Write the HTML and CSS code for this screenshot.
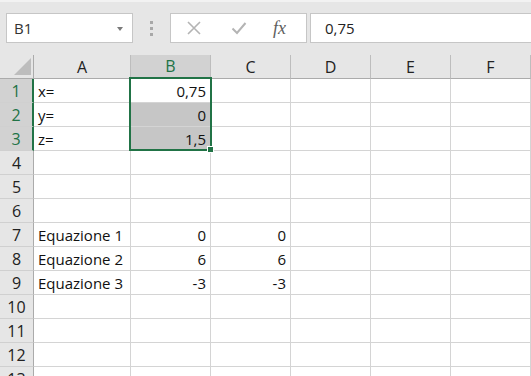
FILE: index.html
```html
<!DOCTYPE html>
<html>
<head>
<meta charset="utf-8">
<link rel="stylesheet" href="styles.css">
</head>
<body>
<div class="app">
  <div class="fbar">
    <div class="namebox">
      <span class="nb-text">B1</span>
      <span class="nb-arrow"></span>
    </div>
    <div class="grip"><span></span><span></span><span></span></div>
    <div class="fbtns">
      <svg class="ico" width="16" height="16" viewBox="0 0 16 16"><path d="M2 2 L14 14 M14 2 L2 14" stroke="#b4b4b4" stroke-width="1.6" fill="none"/></svg>
      <svg class="ico" width="16" height="16" viewBox="0 0 16 16"><path d="M1.5 8.5 L6 13 L14.5 3" stroke="#b4b4b4" stroke-width="2" fill="none"/></svg>
      <span class="fx">fx</span>
    </div>
    <div class="finput">0,75</div>
  </div>
  <div class="sheet">
    <div class="grid">
      <div class="h corner"><span class="tri"></span></div>
      <div class="h col">A</div>
      <div class="h col sel">B</div>
      <div class="h col">C</div>
      <div class="h col">D</div>
      <div class="h col">E</div>
      <div class="h col">F</div>

      <div class="rh sel">1</div>
      <div class="c">x=</div><div class="c n">0,75</div><div class="c"></div><div class="c"></div><div class="c"></div><div class="c"></div>

      <div class="rh sel">2</div>
      <div class="c">y=</div><div class="c n shade">0</div><div class="c"></div><div class="c"></div><div class="c"></div><div class="c"></div>

      <div class="rh sel">3</div>
      <div class="c">z=</div><div class="c n shade">1,5</div><div class="c"></div><div class="c"></div><div class="c"></div><div class="c"></div>

      <div class="rh">4</div>
      <div class="c"></div><div class="c"></div><div class="c"></div><div class="c"></div><div class="c"></div><div class="c"></div>

      <div class="rh">5</div>
      <div class="c"></div><div class="c"></div><div class="c"></div><div class="c"></div><div class="c"></div><div class="c"></div>

      <div class="rh">6</div>
      <div class="c"></div><div class="c"></div><div class="c"></div><div class="c"></div><div class="c"></div><div class="c"></div>

      <div class="rh">7</div>
      <div class="c">Equazione 1</div><div class="c n">0</div><div class="c n">0</div><div class="c"></div><div class="c"></div><div class="c"></div>

      <div class="rh">8</div>
      <div class="c">Equazione 2</div><div class="c n">6</div><div class="c n">6</div><div class="c"></div><div class="c"></div><div class="c"></div>

      <div class="rh">9</div>
      <div class="c">Equazione 3</div><div class="c n">-3</div><div class="c n">-3</div><div class="c"></div><div class="c"></div><div class="c"></div>

      <div class="rh">10</div>
      <div class="c"></div><div class="c"></div><div class="c"></div><div class="c"></div><div class="c"></div><div class="c"></div>

      <div class="rh">11</div>
      <div class="c"></div><div class="c"></div><div class="c"></div><div class="c"></div><div class="c"></div><div class="c"></div>

      <div class="rh">12</div>
      <div class="c"></div><div class="c"></div><div class="c"></div><div class="c"></div><div class="c"></div><div class="c"></div>

      <div class="rh">13</div>
      <div class="c"></div><div class="c"></div><div class="c"></div><div class="c"></div><div class="c"></div><div class="c"></div>
    </div>
    <div class="selection"><span class="handle"></span></div>
  </div>
</div>
</body>
</html>
```
FILE: styles.css
```css
html, body {
  margin: 0;
  padding: 0;
  background: #ffffff;
}
.app {
  width: 531px;
  height: 376px;
  overflow: hidden;
  font-family: "Open Sans", "Noto Sans", sans-serif;
  font-size: 15px;
  color: #111;
}
.fbar {
  height: 55px;
  box-sizing: border-box;
  background: #e6e6e6;
  border-top: 2px solid #f2f2f2;
  display: flex;
  align-items: flex-start;
  padding: 11px 0 0 6px;
}
.namebox {
  width: 127px;
  height: 30px;
  box-sizing: border-box;
  border: 1px solid #c6c6c6;
  background: #fff;
  display: flex;
  align-items: center;
  justify-content: space-between;
  padding: 0 9px 0 7px;
  color: #333;
}
.nb-arrow {
  width: 0;
  height: 0;
  border-left: 3.5px solid transparent;
  border-right: 3.5px solid transparent;
  border-top: 4px solid #7a7a7a;
  margin-top: 1px;
}
.grip {
  width: 37px;
  height: 30px;
  display: flex;
  flex-direction: column;
  align-items: center;
  justify-content: center;
  gap: 3px;
}
.grip span {
  width: 3px;
  height: 3px;
  background: #a8a8a8;
}
.fbtns {
  width: 137px;
  height: 30px;
  box-sizing: border-box;
  border: 1px solid #c6c6c6;
  background: #fff;
  display: flex;
  align-items: center;
  padding-left: 15px;
  gap: 29px;
}
.ico {
  display: block;
}
.fx {
  font-family: "Liberation Serif", "DejaVu Serif", serif;
  font-style: italic;
  font-size: 18px;
  color: #5e5e5e;
  margin-left: -3px;
}
.finput {
  flex: 1;
  height: 30px;
  box-sizing: border-box;
  margin-left: 3px;
  border: 1px solid #c6c6c6;
  border-right: none;
  background: #fff;
  display: flex;
  align-items: center;
  padding-left: 14px;
  color: #222;
}
.sheet {
  position: relative;
}
.grid {
  display: grid;
  grid-template-columns: 34px 97px repeat(5, 80px);
  grid-auto-rows: 24px;
}
.grid > div {
  box-sizing: border-box;
  display: flex;
  align-items: center;
  border-right: 1px solid #d4d4d4;
  border-bottom: 1px solid #d4d4d4;
  white-space: nowrap;
  overflow: hidden;
}
.grid > .h {
  background: #e6e6e6;
  border-bottom: 1px solid #ababab;
  border-right: 1px solid #bdbdbd;
  justify-content: center;
  color: #222;
  font-size: 16px;
}
.grid > .corner {
  position: relative;
  border-right: 1px solid #ababab;
}
.tri {
  position: absolute;
  right: 2px;
  bottom: 3px;
  width: 0;
  height: 0;
  border-left: 17px solid transparent;
  border-bottom: 17px solid #bdbdbd;
}
.grid > .col.sel {
  background: #d2d2d2;
  color: #217346;
  border-bottom: 2px solid #217346;
}
.grid > .rh {
  background: #e6e6e6;
  border-right: 1px solid #ababab;
  border-bottom: 1px solid #d0d0d0;
  justify-content: center;
  color: #222;
  font-size: 16px;
}
.grid > .rh.sel {
  background: #d2d2d2;
  color: #217346;
  border-right: 2px solid #217346;
}
.grid > .c {
  padding-left: 4px;
}
.grid > .c.n {
  justify-content: flex-end;
  padding-left: 0;
  padding-right: 4px;
}
.grid > .c.shade {
  background: #c6c6c6;
}
.selection {
  position: absolute;
  left: 129px;
  top: 22px;
  width: 83px;
  height: 74px;
  box-sizing: border-box;
  border: 2px solid #217346;
  pointer-events: none;
}
.handle {
  position: absolute;
  right: -4px;
  bottom: -4px;
  width: 5px;
  height: 5px;
  background: #217346;
  border: 1px solid #fff;
}
```
